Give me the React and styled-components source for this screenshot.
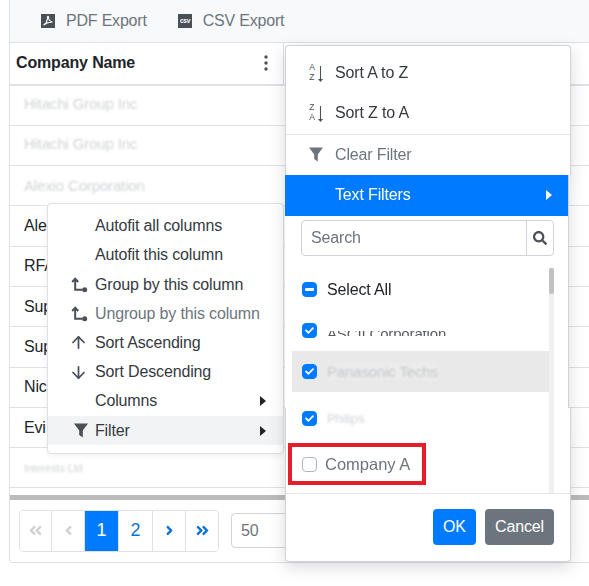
import React from "react";
import styled, { createGlobalStyle } from "styled-components";
import { FaAngleDoubleLeft, FaAngleLeft, FaAngleRight, FaAngleDoubleRight, FaSearch, FaCheck } from "react-icons/fa";
import { ArrowUp, ArrowDown } from "lucide-react";

const Global = createGlobalStyle`
  html, body { margin: 0; padding: 0; background: #fff; overflow: hidden; }
  body { font-family: "Liberation Sans", Arial, sans-serif; font-size: 16px; color: #212529; letter-spacing: -0.15px; }
  * { box-sizing: border-box; }
`;

const Page = styled.div`
  position: relative;
  width: 589px;
  height: 586px;
  overflow: hidden;
`;
const Grid = styled.div`
  margin-left: 9px;
  width: 600px;
  height: 563px;
  border: 1px solid #dee2e6;
  border-top: 0;
  border-radius: 0 0 4px 4px;
  display: flex;
  flex-direction: column;
`;
const Toolbar = styled.div`
  height: 43px;
  flex: none;
  display: flex;
  align-items: center;
  padding-left: 31px;
  gap: 31px;
  background: #f8f9fa;
  border-bottom: 1px solid #dee2e6;
`;
const ToolButton = styled.div`
  display: flex;
  align-items: center;
  gap: 11px;
  color: #6c757d;
  letter-spacing: -0.2px;
`;
const HeaderRow = styled.div`
  height: 40.5px;
  flex: none;
  display: flex;
  align-items: center;
  justify-content: space-between;
  width: 274px;
  padding: 0 15px 1px 6px;
  font-weight: 700;
  border-right: 1px solid #dee2e6;
`;
const HeaderLine = styled.div`
  height: 2px;
  flex: none;
  background: #dee2e6;
`;
const Row = styled.div`
  height: 40.3px;
  flex: none;
  display: flex;
  align-items: center;
  padding-left: 14px;
  border-bottom: 1px solid #dee2e6;
  white-space: nowrap;
`;
const Smudge = styled.span`
  color: ${(p) => (p.$dark ? "#3a3f44" : "#8f959b")};
  font-size: ${(p) => p.$size || 15}px;
  filter: blur(${(p) => (p.$dark ? 0.4 : 0.9)}px);
  opacity: ${(p) => (p.$dark ? 0.85 : 0.42)};
  clip-path: ${(p) => (p.$dark ? "inset(35% 0 35% 0)" : "none")};
  background: ${(p) => p.$bg || "transparent"};
  transform: translateY(${(p) => p.$shift || 0}px);
`;
const ScrollBar = styled.div`
  height: 5px;
  flex: none;
  margin-top: 6.5px;
  background: #b9bbbd;
`;
const Footer = styled.div`
  display: flex;
  align-items: center;
  gap: 12px;
  padding: 10px 9px;
`;
const Pager = styled.div`
  display: flex;
  height: 42px;
  border: 1px solid #dee2e6;
  border-radius: 4px;
  overflow: hidden;
`;
const PageCell = styled.div`
  width: ${(p) => p.$w || 33}px;
  display: flex;
  align-items: center;
  justify-content: center;
  border-right: ${(p) => (p.$last ? "0" : "1px solid #dee2e6")};
  background: ${(p) => (p.$active ? "#007bff" : "#fff")};
  color: ${(p) => (p.$active ? "#fff" : p.$off ? "#ced1d4" : "#0b72d9")};
  font-size: 18px;
  svg {
    font-size: 15px;
  }
`;
const SizeSelect = styled.div`
  width: 120px;
  height: 35px;
  border: 1px solid #ced4da;
  border-radius: 4px;
  color: #6c757d;
  padding: 0 9px;
  font-size: 16px;
  display: flex;
  align-items: center;
`;

const Menu = styled.div`
  position: absolute;
  display: flex;
  flex-direction: column;
  background: #fff;
`;
const ColumnMenu = styled(Menu)`
  left: 47px;
  top: 203px;
  width: 237px;
  height: 251px;
  padding-top: 7.6px;
  border: 1px solid #dee2e6;
  border-radius: 4px;
  box-shadow: 0 2px 6px rgba(0, 0, 0, 0.06);
`;
const ColItem = styled.div`
  height: 29.2px;
  flex: none;
  display: flex;
  align-items: center;
  padding-right: 17px;
  background: ${(p) => (p.$active ? "#f1f3f5" : "transparent")};
  color: ${(p) => (p.$off ? "#6c757d" : "#343a40")};
`;
const ColIcon = styled.span`
  width: 47px;
  flex: none;
  display: flex;
  justify-content: flex-end;
  padding-right: 7px;
  color: #495057;
`;
const Label = styled.span`
  flex: 1;
`;
const Caret = styled.i`
  width: 0;
  height: 0;
  border-style: solid;
  border-width: 5px 0 5px 6px;
  border-color: transparent transparent transparent ${(p) => p.$c || "#212529"};
`;

const FilterMenu = styled(Menu)`
  left: 285px;
  top: 45px;
  width: 286px;
  height: 517px;
  background: transparent;
  align-items: flex-start;
  filter: drop-shadow(0 5px 8px rgba(0, 0, 0, 0.14));
`;
const Block = styled.div`
  width: ${(p) => p.$w}px;
  height: ${(p) => p.$h}px;
  flex: none;
  background: #fff;
  border: solid #cfd3d7;
  border-width: ${(p) => p.$b};
  border-radius: ${(p) => p.$r};
`;
const TopBlock = styled(Block)`
  padding-top: 7px;
`;
const MenuRow = styled.div`
  height: 40px;
  display: flex;
  align-items: center;
  color: ${(p) => (p.$off ? "#6c757d" : "#343a40")};
`;
const DividedRow = styled(MenuRow)`
  border-top: 1px solid #e3e6e8;
  margin-top: 1px;
`;
const MenuIcon = styled.span`
  width: 49px;
  flex: none;
  display: flex;
  justify-content: flex-end;
  padding-right: 12px;
  color: #5a6268;
`;
const BlueRow = styled.div`
  height: 41px;
  width: 100%;
  display: flex;
  align-items: center;
  background: #007bff;
  color: #fff;
  padding: 0 16px 1px 50px;
`;
const SearchBox = styled.div`
  margin: 4px 0 13px 16px;
  width: 253px;
  height: 36px;
  display: flex;
  border: 1px solid #ced4da;
  border-radius: 4px;
`;
const SearchInput = styled.div`
  flex: 1;
  padding-left: 9px;
  display: flex;
  align-items: center;
  color: #6c757d;
`;
const SearchButton = styled.div`
  width: 27px;
  display: flex;
  align-items: center;
  justify-content: center;
  border-left: 1px solid #ced4da;
  color: #495057;
  font-size: 14px;
`;
const ListRow = styled.div`
  position: relative;
  height: ${(p) => p.$h || 41}px;
  width: 257px;
  margin-left: ${(p) => p.$ml ?? 7}px;
  padding-left: 10px;
  padding-bottom: ${(p) => p.$pb || 0}px;
  display: flex;
  align-items: center;
  gap: 10px;
  background: ${(p) => (p.$hl ? "#e9e9e9" : "transparent")};
  color: ${(p) => (p.$off ? "#6c757d" : "#212529")};
`;
const Check = styled.span`
  width: 15px;
  height: 15px;
  flex: none;
  border-radius: 4px;
  display: flex;
  align-items: center;
  justify-content: center;
  background: ${(p) => (p.$off ? "#fff" : "#007bff")};
  border: 1px solid ${(p) => (p.$off ? "#adb5bd" : "#007bff")};
  color: #fff;
  font-size: 9px;
`;
const Dash = styled.b`
  width: 9px;
  height: 2.5px;
  background: #fff;
  border-radius: 1px;
`;
const CompanyText = styled.span`
  font-size: 16.5px;
  margin-left: -2px;
  letter-spacing: 0;
`;
const RedMark = styled.div`
  position: absolute;
  left: -4px;
  top: 2px;
  width: 138px;
  height: 42px;
  border: 4px solid #e71d2b;
`;
const Track = styled.div`
  position: absolute;
  left: 264px;
  top: 223px;
  width: 5px;
  height: 225px;
  background: #f0f0f0;
`;
const Thumb = styled.div`
  height: 26px;
  background: #c1c1c1;
  border-radius: 2px;
`;
const MenuFooter = styled.div`
  margin-top: 6px;
  border-top: 1px solid #e3e6e8;
  display: flex;
  justify-content: flex-end;
  gap: 9px;
  padding: 15px 16px 0 0;
`;
const Btn = styled.div`
  width: ${(p) => p.$w}px;
  height: 36px;
  display: flex;
  align-items: center;
  justify-content: center;
  border-radius: 4px;
  color: #fff;
  background: ${(p) => (p.$sec ? "#6c757d" : "#007bff")};
`;

const Kebab = () => (
  <svg width="4" height="16" viewBox="0 0 4 16" fill="#495057">
    <circle cx="2" cy="2" r="1.7" /><circle cx="2" cy="8" r="1.7" /><circle cx="2" cy="14" r="1.7" />
  </svg>
);
const PdfIcon = () => (
  <svg width="14" height="14" viewBox="0 0 14 14">
    <rect width="14" height="14" fill="#495057" />
    <path d="M2.500 11C5 9.500 6.500 6 6.500 3c0-.8 1-.8 1 0 0 2.500 1.500 4.500 4 5-2.500 0-6 .8-9 3z" fill="none" stroke="#fff" strokeWidth="1.100" />
  </svg>
);
const CsvIcon = () => (
  <svg width="14" height="14" viewBox="0 0 14 14">
    <rect width="14" height="14" fill="#495057" />
    <text x="7" y="9.300" textAnchor="middle" fontSize="6.500" fontWeight="700" fill="#fff" fontFamily="Liberation Sans">csv</text>
  </svg>
);
const Funnel = ({ c = "#495057" }) => (
  <svg width="14" height="15" viewBox="0 0 14 15"><path d="M0 .5h14L8.800 7.500v7L5.200 12V7.500z" fill={c} /></svg>
);
const GroupIcon = () => (
  <svg width="17" height="16" viewBox="0 0 17 16" fill="none" stroke="#495057" strokeWidth="2">
    <path d="M1.200 5L4.200 1.800 7.200 5M4.200 2v10.800h7.500" />
    <circle cx="13.700" cy="12.800" r="2.500" fill="#495057" stroke="none" />
  </svg>
);
const SortLetters = styled.span`
  display: flex;
  flex-direction: column;
  font-size: 8.5px;
  line-height: 9.7px;
  letter-spacing: 0;
  color: #495057;
`;
const SortGlyph = styled.span`
  display: flex;
  align-items: center;
  gap: 3px;
`;
const SortIcon = ({ a, b }) => (
  <SortGlyph>
    <SortLetters><span>{a}</span><span>{b}</span></SortLetters>
    <svg width="5" height="18" viewBox="0 0 5 18" fill="#495057">
      <path d="M2.500 2v13.500" stroke="#495057" strokeWidth="1.100" />
      <path d="M0 15h5l-2.500 3z" />
    </svg>
  </SortGlyph>
);

const rows = ["", "", "", "Ale", "RFA", "Sup", "Sup", "Nic", "Evi", ""];
const blur = ["Hitachi Group Inc", "Hitachi Group Inc", "Alexio Corporation"];

export default function App() {
  return (
    <Page>
      <Global />
      <Grid>
        <Toolbar>
          <ToolButton><PdfIcon />PDF Export</ToolButton>
          <ToolButton><CsvIcon />CSV Export</ToolButton>
        </Toolbar>
        <HeaderRow>Company Name<Kebab /></HeaderRow>
        <HeaderLine />
        {rows.map((r, i) => (
          <Row key={i}>
            {i < 3 ? <Smudge $shift={i === 2 ? 0 : -2}>{blur[i]}</Smudge> : i === 9 ? <Smudge $size={11}>Interests Ltd</Smudge> : r}
          </Row>
        ))}
        <ScrollBar />
        <Footer>
          <Pager>
            <PageCell $off $w={32}><FaAngleDoubleLeft /></PageCell>
            <PageCell $off><FaAngleLeft /></PageCell>
            <PageCell $active $w={34}>1</PageCell>
            <PageCell $w={34}>2</PageCell>
            <PageCell><FaAngleRight /></PageCell>
            <PageCell $last $w={32}><FaAngleDoubleRight /></PageCell>
          </Pager>
          <SizeSelect>50</SizeSelect>
        </Footer>
      </Grid>

      <ColumnMenu>
        <ColItem><ColIcon /><Label>Autofit all columns</Label></ColItem>
        <ColItem><ColIcon /><Label>Autofit this column</Label></ColItem>
        <ColItem><ColIcon><GroupIcon /></ColIcon><Label>Group by this column</Label></ColItem>
        <ColItem $off><ColIcon><GroupIcon /></ColIcon><Label>Ungroup by this column</Label></ColItem>
        <ColItem><ColIcon><ArrowUp size={19} strokeWidth={2.2} /></ColIcon><Label>Sort Ascending</Label></ColItem>
        <ColItem><ColIcon><ArrowDown size={19} strokeWidth={2.2} /></ColIcon><Label>Sort Descending</Label></ColItem>
        <ColItem><ColIcon /><Label>Columns</Label><Caret /></ColItem>
        <ColItem $active><ColIcon><Funnel /></ColIcon><Label>Filter</Label><Caret /></ColItem>
      </ColumnMenu>

      <FilterMenu>
        <TopBlock $w={286} $h={130} $b="1px 1px 0 1px" $r="4px 4px 0 0">
          <MenuRow><MenuIcon><SortIcon a="A" b="Z" /></MenuIcon>Sort A to Z</MenuRow>
          <MenuRow><MenuIcon><SortIcon a="Z" b="A" /></MenuIcon>Sort Z to A</MenuRow>
          <DividedRow $off><MenuIcon><Funnel c="#6c757d" /></MenuIcon>Clear Filter</DividedRow>
        </TopBlock>
        <Block $w={284} $h={233} $b="0 1px 0 0" $r="0">
          <BlueRow><Label>Text Filters</Label><Caret $c="#fff" /></BlueRow>
          <SearchBox>
            <SearchInput>Search</SearchInput>
            <SearchButton><FaSearch /></SearchButton>
          </SearchBox>
          <ListRow><Check><Dash /></Check>Select All</ListRow>
          <ListRow><Check><FaCheck /></Check><Smudge $dark $shift={3}>ASCII Corporation</Smudge></ListRow>
          <ListRow $hl><Check><FaCheck /></Check><Smudge $bg="#f0f0f0">Panasonic Techs</Smudge></ListRow>
        </Block>
        <Block $w={286} $h={154} $b="0 1px 1px 1px" $r="0 0 4px 4px">
          <ListRow $ml={6} $h={33} $pb={13}><Check><FaCheck /></Check><Smudge $size={13}>Philips</Smudge></ListRow>
          <ListRow $ml={6} $h={46} $off>
            <Check $off /><CompanyText>Company A</CompanyText>
            <RedMark />
          </ListRow>
          <MenuFooter>
            <Btn $w={43}>OK</Btn>
            <Btn $w={69} $sec>Cancel</Btn>
          </MenuFooter>
        </Block>
        <Track><Thumb /></Track>
      </FilterMenu>
    </Page>
  );
}
